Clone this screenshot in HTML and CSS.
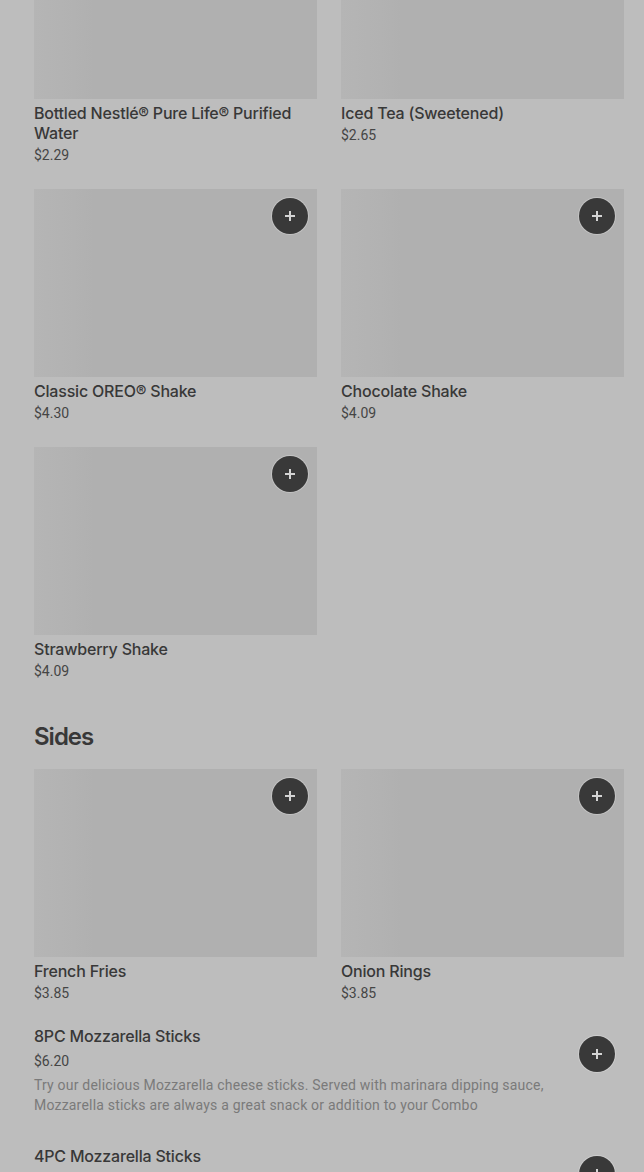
FILE: index.html
```html
<!DOCTYPE html>
<html lang="en">
<head>
    <meta charset="UTF-8">
    <meta name="viewport" content="width=device-width, initial-scale=1.0">
    <title>Menu</title>
    <link rel="stylesheet" href="styles.css">
</head>
<body>
    <main class="menu">
        <section class="menu-section">
            <div class="card-grid">
                <div class="card">
                    <div class="card-image"></div>
                    <div class="card-title">Bottled Nestlé® Pure Life® Purified Water</div>
                    <div class="card-price">$2.29</div>
                </div>
                <div class="card">
                    <div class="card-image"></div>
                    <div class="card-title">Iced Tea (Sweetened)</div>
                    <div class="card-price">$2.65</div>
                </div>
                <div class="card">
                    <div class="card-image">
                        <button class="add-btn" aria-label="Add"><svg viewBox="0 0 12 12" width="12" height="12"><path d="M6 1v10M1 6h10" stroke="currentColor" stroke-width="2"/></svg></button>
                    </div>
                    <div class="card-title">Classic OREO® Shake</div>
                    <div class="card-price">$4.30</div>
                </div>
                <div class="card">
                    <div class="card-image">
                        <button class="add-btn" aria-label="Add"><svg viewBox="0 0 12 12" width="12" height="12"><path d="M6 1v10M1 6h10" stroke="currentColor" stroke-width="2"/></svg></button>
                    </div>
                    <div class="card-title">Chocolate Shake</div>
                    <div class="card-price">$4.09</div>
                </div>
                <div class="card">
                    <div class="card-image">
                        <button class="add-btn" aria-label="Add"><svg viewBox="0 0 12 12" width="12" height="12"><path d="M6 1v10M1 6h10" stroke="currentColor" stroke-width="2"/></svg></button>
                    </div>
                    <div class="card-title">Strawberry Shake</div>
                    <div class="card-price">$4.09</div>
                </div>
            </div>
        </section>

        <section class="menu-section">
            <h2 class="section-title">Sides</h2>
            <div class="card-grid">
                <div class="card">
                    <div class="card-image">
                        <button class="add-btn" aria-label="Add"><svg viewBox="0 0 12 12" width="12" height="12"><path d="M6 1v10M1 6h10" stroke="currentColor" stroke-width="2"/></svg></button>
                    </div>
                    <div class="card-title">French Fries</div>
                    <div class="card-price">$3.85</div>
                </div>
                <div class="card">
                    <div class="card-image">
                        <button class="add-btn" aria-label="Add"><svg viewBox="0 0 12 12" width="12" height="12"><path d="M6 1v10M1 6h10" stroke="currentColor" stroke-width="2"/></svg></button>
                    </div>
                    <div class="card-title">Onion Rings</div>
                    <div class="card-price">$3.85</div>
                </div>
            </div>
            <div class="item-list">
                <div class="list-item">
                    <div class="list-text">
                        <div class="card-title">8PC Mozzarella Sticks</div>
                        <div class="list-price">$6.20</div>
                        <div class="list-desc">Try our delicious Mozzarella cheese sticks. Served with marinara dipping sauce, Mozzarella sticks are always a great snack or addition to your Combo</div>
                    </div>
                    <button class="add-btn list-btn" aria-label="Add"><svg viewBox="0 0 12 12" width="12" height="12"><path d="M6 1v10M1 6h10" stroke="currentColor" stroke-width="2"/></svg></button>
                </div>
                <div class="list-item">
                    <div class="list-text">
                        <div class="card-title">4PC Mozzarella Sticks</div>
                        <div class="list-price">$3.99</div>
                        <div class="list-desc">Try our delicious Mozzarella cheese sticks. Served with marinara dipping sauce.</div>
                    </div>
                    <button class="add-btn list-btn" aria-label="Add"><svg viewBox="0 0 12 12" width="12" height="12"><path d="M6 1v10M1 6h10" stroke="currentColor" stroke-width="2"/></svg></button>
                </div>
            </div>
        </section>
    </main>
</body>
</html>
```

FILE: styles.css
```css
html, body {
    margin: 0;
    background-color: #bdbdbd;
    color: #383838;
    font-family: 'Inter', 'Roboto', 'Liberation Sans', sans-serif;
    -webkit-font-smoothing: antialiased;
    overflow: hidden;
}
.menu {
    margin-top: -89px;
    padding: 0 20px 0 34px;
}
.card-grid {
    display: grid;
    grid-template-columns: 283px 283px;
    column-gap: 24px;
    row-gap: 24px;
}
.card-image {
    position: relative;
    height: 188px;
    background-color: #b0b0b0;
    background-image: linear-gradient(90deg, #b5b5b5 0, #b2b2b2 40px, #b0b0b0 60px);
}
.card-title {
    margin-top: 4px;
    font-size: 16px;
    line-height: 20px;
    font-weight: 500;
    letter-spacing: -0.2px;
    color: #383838;
}
.card-price,
.list-price,
.list-desc {
    font-family: 'Roboto', 'Liberation Sans', sans-serif;
    font-size: 14px;
    line-height: 20px;
}
.card-price {
    margin-top: 2px;
    color: #454545;
}
.section-title {
    margin: 40px 0 16px;
    font-size: 24px;
    line-height: 32px;
    font-weight: 600;
    letter-spacing: -1px;
    color: #383838;
}
.add-btn {
    display: flex;
    justify-content: center;
    align-items: center;
    width: 36px;
    height: 36px;
    padding: 0;
    border: none;
    border-radius: 50%;
    background-color: #393939;
    color: #d4d4d4;
    box-shadow: 0 0 0 1px rgba(255, 255, 255, 0.25);
    cursor: pointer;
}
.card-image .add-btn {
    position: absolute;
    top: 9px;
    right: 9px;
}
.item-list {
    display: flex;
    flex-direction: column;
    gap: 31px;
    margin-top: 23px;
}
.list-item {
    display: flex;
    justify-content: space-between;
    align-items: flex-start;
}
.list-text {
    width: 525px;
}
.list-text .card-title {
    margin-top: 0;
}
.list-price {
    margin-top: 5px;
    color: #454545;
}
.list-desc {
    margin-top: 4px;
    letter-spacing: 0.2px;
    color: #7a7a7a;
}
.list-btn {
    margin-top: 10px;
    margin-right: 9px;
}
```
